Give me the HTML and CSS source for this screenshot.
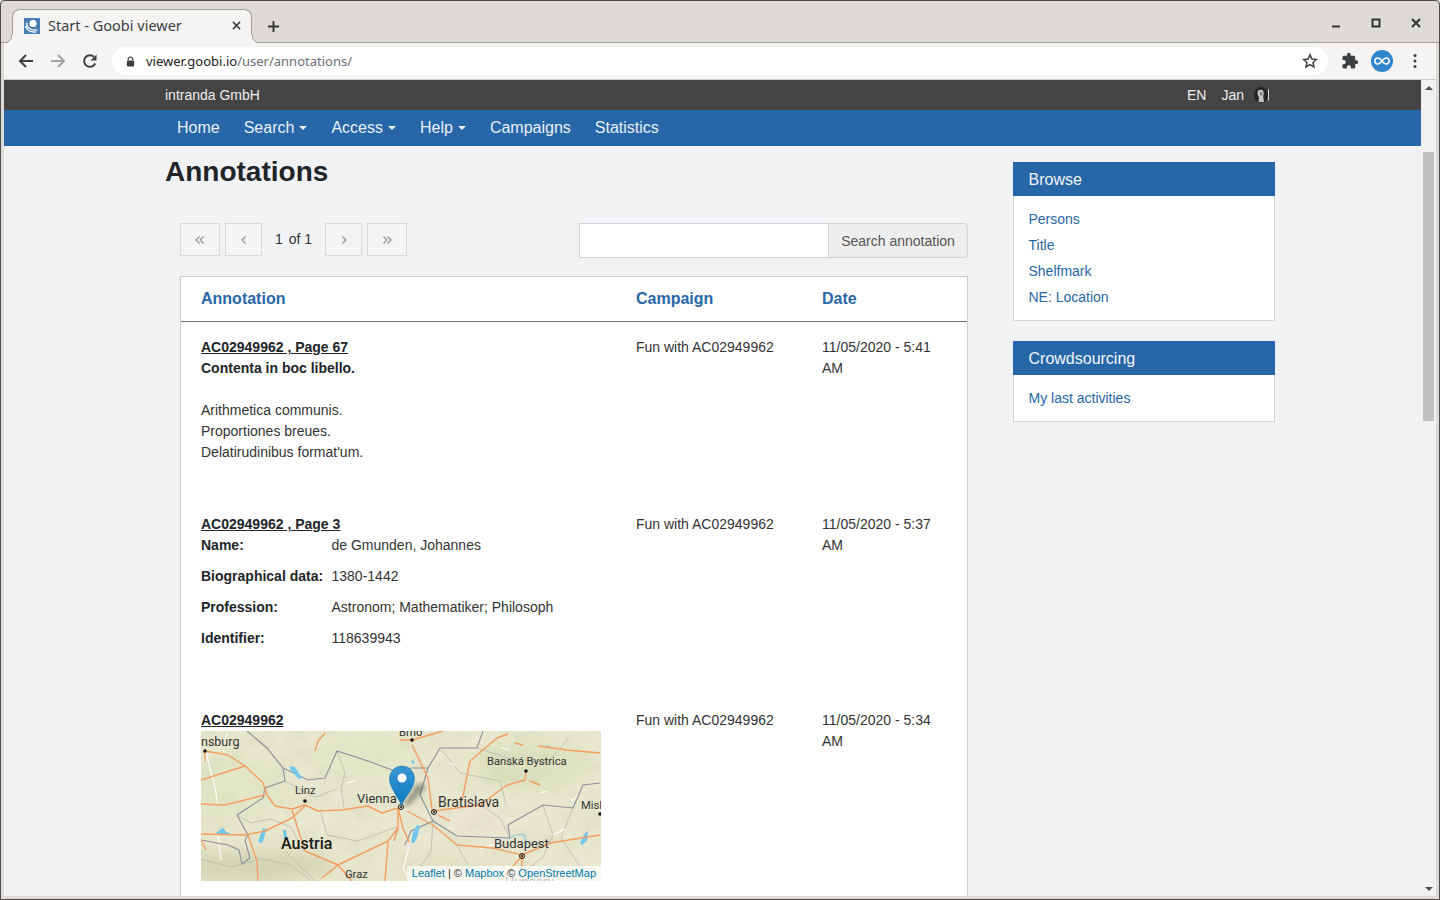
FILE: index.html
```html
<!DOCTYPE html>
<html lang="en">
<head>
    <meta charset="UTF-8">
    <title>Start - Goobi viewer</title>
    <link rel="stylesheet" href="styles.css">
</head>
<body>
<div class="window">
    <!-- Browser tabs -->
    <div class="tabstrip">
        <div class="tab">
            <svg class="favicon" viewBox="0 0 16 16">
                <rect width="16" height="16" fill="#4a7eb3"/>
                <circle cx="9" cy="5.5" r="3.6" fill="#fff"/>
                <path d="M2.500 4.500c0 5 4 8.500 11 7.500M1.500 8c1 4 5 6.500 10.500 6" fill="none" stroke="#fff" stroke-width="1.300"/>
            </svg>
            <span class="tab-title">Start - Goobi viewer</span>
            <svg class="tab-close" viewBox="0 0 10 10"><path d="M1 1l8 8M9 1l-8 8" stroke="#3c4043" stroke-width="1.700"/></svg>
        </div>
        <svg class="new-tab" viewBox="0 0 14 14"><path d="M7 1v12M1 7h12" stroke="#333" stroke-width="2"/></svg>
        <div class="win-controls">
            <svg viewBox="0 0 10 10"><path d="M1 8.500h8" stroke="#2e3436" stroke-width="2"/></svg>
            <svg viewBox="0 0 10 10"><rect x="1.500" y="1.500" width="7" height="7" fill="none" stroke="#2e3436" stroke-width="2"/></svg>
            <svg viewBox="0 0 10 10"><path d="M1 1l8 8M9 1l-8 8" stroke="#2e3436" stroke-width="2"/></svg>
        </div>
    </div>

    <!-- Browser toolbar -->
    <div class="toolbar">
        <svg class="tool" viewBox="0 0 16 16"><path d="M15 8H2.500M8 2L2 8l6 6" fill="none" stroke="#3c4043" stroke-width="2"/></svg>
        <svg class="tool" viewBox="0 0 16 16"><path d="M1 8h12.500M8 2l6 6-6 6" fill="none" stroke="#a3a3a3" stroke-width="2"/></svg>
        <svg class="tool" viewBox="0 0 16 16"><path d="M13.200 10.500A5.800 5.800 0 1 1 12 3.900" fill="none" stroke="#3c4043" stroke-width="2"/><path d="M14.500 1.500v6h-6z" fill="#3c4043"/></svg>
        <div class="omnibox">
            <svg class="lock" viewBox="0 0 10 12"><path d="M2.500 5V3.500a2.500 2.500 0 0 1 5 0V5" fill="none" stroke="#3c4043" stroke-width="1.300"/><rect x="1" y="5" width="8" height="6.500" rx="1" fill="#3c4043"/></svg>
            <span class="url">viewer.goobi.io<span class="url-path">/user/annotations/</span></span>
            <svg class="star" viewBox="0 0 16 16"><path d="M8 1.800l1.900 4.200 4.500.5-3.400 3 1 4.500L8 11.700 4 14l1-4.500-3.400-3 4.500-.5z" fill="none" stroke="#3c4043" stroke-width="1.500"/></svg>
        </div>
        <svg class="puzzle" viewBox="0 0 24 24"><path d="M20.500 11H19V7c0-1.100-.9-2-2-2h-4V3.500C13 2.120 11.880 1 10.500 1S8 2.120 8 3.500V5H4c-1.100 0-1.990.9-1.990 2v3.800H3.500c1.490 0 2.700 1.210 2.700 2.700s-1.210 2.700-2.700 2.700H2V20c0 1.100.9 2 2 2h3.800v-1.500c0-1.490 1.210-2.700 2.700-2.700 1.490 0 2.700 1.210 2.700 2.700V22H17c1.100 0 2-.9 2-2v-4h1.500c1.380 0 2.500-1.120 2.500-2.500S21.880 11 20.500 11z" fill="#3c4043"/></svg>
        <svg class="profile" viewBox="0 0 22 22"><circle cx="11" cy="11" r="11" fill="#2f86cc"/><path d="M11 11c-1.600-2.300-2.800-3-4.200-3a3 3 0 0 0 0 6c1.400 0 2.600-.7 4.200-3s2.800-3 4.200-3a3 3 0 0 1 0 6c-1.400 0-2.600-.7-4.200-3z" fill="none" stroke="#fff" stroke-width="1.600"/></svg>
        <svg class="kebab" viewBox="0 0 4 16"><circle cx="2" cy="2.500" r="1.500" fill="#3c4043"/><circle cx="2" cy="8" r="1.500" fill="#3c4043"/><circle cx="2" cy="13.500" r="1.500" fill="#3c4043"/></svg>
    </div>

    <div class="viewport">
        <div class="page">
            <div class="topbar">
                <div class="wrap topbar-inner">
                    <span>intranda GmbH</span>
                    <div class="user-menu">
                        <span>EN</span>
                        <span>Jan</span>
                        <svg class="avatar" viewBox="0 0 15 16">
                            <ellipse cx="7" cy="8" rx="7" ry="8" fill="#262626"/>
                            <path d="M3.500 5c0-2.500 5-3 6-.5.500 1.500.3 3-.3 4.500l.8 6H4.500l.5-4.500C4 9 3.500 7 3.500 5z" fill="#c4c4c4"/>
                            <path d="M6 5h2.200v3.500H6z" fill="#7f7f7f"/>
                            <path d="M14.500 2.500v11" stroke="#d8d8d8"/>
                        </svg>
                    </div>
                </div>
            </div>
            <nav class="navbar">
                <div class="wrap nav-inner">
                    <a>Home</a>
                    <a class="has-caret">Search</a>
                    <a class="has-caret">Access</a>
                    <a class="has-caret">Help</a>
                    <a>Campaigns</a>
                    <a>Statistics</a>
                </div>
            </nav>

            <div class="wrap layout">
                <main class="content">
                    <h1>Annotations</h1>

                    <div class="list-controls">
                        <div class="pager">
                            <button class="page-btn wide"><svg viewBox="0 0 10 10"><path d="M4.500 1.500L1 5l3.500 3.500M8.500 1.500L5 5l3.500 3.500" fill="none" stroke="#8a8a8a" stroke-width="1.100"/></svg></button>
                            <button class="page-btn"><svg viewBox="0 0 10 10"><path d="M6.500 1.500L3 5l3.500 3.500" fill="none" stroke="#8a8a8a" stroke-width="1.100"/></svg></button>
                            <span class="page-count"><span>1</span><span>of 1</span></span>
                            <button class="page-btn"><svg viewBox="0 0 10 10"><path d="M3.500 1.500L7 5 3.500 8.500" fill="none" stroke="#8a8a8a" stroke-width="1.100"/></svg></button>
                            <button class="page-btn wide"><svg viewBox="0 0 10 10"><path d="M1.500 1.500L5 5 1.500 8.500M5.500 1.500L9 5 5.500 8.500" fill="none" stroke="#8a8a8a" stroke-width="1.100"/></svg></button>
                        </div>
                        <div class="search-group">
                            <input type="text" class="search-input">
                            <button class="search-btn">Search annotation</button>
                        </div>
                    </div>

                    <table class="annotations">
                        <colgroup>
                            <col class="col-annotation">
                            <col class="col-campaign">
                            <col class="col-date">
                        </colgroup>
                        <thead>
                            <tr>
                                <th>Annotation</th>
                                <th>Campaign</th>
                                <th>Date</th>
                            </tr>
                        </thead>
                        <tbody>
                            <tr class="row-text">
                                <td>
                                    <a class="doc-link">AC02949962 , Page 67</a><br>
                                    <strong>Contenta in boc libello.</strong><br>
                                    <br>
                                    Arithmetica communis.<br>
                                    Proportiones breues.<br>
                                    Delatirudinibus format'um.
                                </td>
                                <td>Fun with AC02949962</td>
                                <td>11/05/2020 - 5:41 AM</td>
                            </tr>
                            <tr class="row-person">
                                <td>
                                    <a class="doc-link">AC02949962 , Page 3</a>
                                    <dl class="person">
                                        <dt>Name:</dt><dd>de Gmunden, Johannes</dd>
                                        <dt>Biographical data:</dt><dd>1380-1442</dd>
                                        <dt>Profession:</dt><dd>Astronom; Mathematiker; Philosoph</dd>
                                        <dt>Identifier:</dt><dd>118639943</dd>
                                    </dl>
                                </td>
                                <td>Fun with AC02949962</td>
                                <td>11/05/2020 - 5:37 AM</td>
                            </tr>
                            <tr>
                                <td>
                                    <a class="doc-link">AC02949962</a>
                                    <div class="map">
                                        <svg class="map-tiles" viewBox="0 0 400 150">
                                            <defs>
                                                <filter id="soft"><feGaussianBlur stdDeviation="8"/></filter>
                                                <filter id="softer"><feGaussianBlur stdDeviation="2.500"/></filter>
                                                <filter id="relief" x="0" y="0" width="100%" height="100%">
                                                    <feTurbulence type="fractalNoise" baseFrequency=".035 .05" numOctaves="4" seed="7"/>
                                                    <feColorMatrix values="0 0 0 0 .62  0 0 0 0 .65  0 0 0 0 .45  1.800 0 0 0 -.75"/>
                                                </filter>
                                                <linearGradient id="pin" x1="0" y1="0" x2="0" y2="1">
                                                    <stop offset="0" stop-color="#3b98d4"/>
                                                    <stop offset="1" stop-color="#0a78bd"/>
                                                </linearGradient>
                                            </defs>
                                            <rect width="400" height="150" fill="#e8e7cf"/>
                                            <g filter="url(#soft)">
                                                <ellipse cx="55" cy="135" rx="80" ry="14" fill="#d2d4b2"/>
                                                <ellipse cx="30" cy="55" rx="55" ry="30" fill="#e2e6c6"/>
                                                <ellipse cx="160" cy="25" rx="50" ry="22" fill="#e3e7c8"/>
                                                <ellipse cx="330" cy="35" rx="60" ry="24" fill="#dde1c0"/>
                                                <ellipse cx="270" cy="88" rx="40" ry="18" fill="#ebe6d4"/>
                                                <ellipse cx="240" cy="138" rx="50" ry="12" fill="#e2e2c6"/>
                                            </g>
                                            <rect width="400" height="150" filter="url(#relief)" opacity=".45"/>
                                            <!-- minor roads and regional borders -->
                                            <g fill="none" stroke="#bcc0b2" stroke-width=".9">
                                                <path d="M136 20L144 42 140 58 143 76M84 50L114 66 136 58M120 82L126 104 156 110 196 96"/>
                                                <path d="M36 84L50 92 70 88 90 96 102 120M0 128L30 136 60 128 90 134 110 150"/>
                                                <path d="M239 17L259 42 299 50 305 74M276 17L306 27 346 32 368 7M342 74L352 104 342 126 312 150"/>
                                                <path d="M232 90L230 120 210 150M256 114L276 150M309 107L299 87 269 67M372 77L360 107 380 137M84 120L114 150"/>
                                            </g>
                                            <g fill="none" stroke="#fff" stroke-width="1.100">
                                                <path d="M5 22L13 52 17 74M17 103L20 129M248 32L254 34M300 16L308 19M340 62L346 60M370 70L378 64"/>
                                                <path d="M352 104L364 98M208 116L202 138 210 150M146 52L154 50M24 14L26 2M278 118L294 113"/>
                                            </g>
                                            <!-- country borders -->
                                            <g fill="none" stroke="#8b8f9b" stroke-width="1.100">
                                                <path d="M46 0L66 17 82 37 84 50 64 57 62 67 36 84 47 104 44 109 49 127 41 133 38 119 27 114 0 109"/>
                                                <path d="M82 37L107 49 124 47 136 20 167 30 191 39 211 37 227 37 239 17 276 17 282 0"/>
                                                <path d="M227 37L219 64 232 90 256 105 309 107 307 94 342 74 372 77 382 54 399 52"/>
                                                <path d="M232 90L210 100 204 114"/>
                                            </g>
                                            <!-- water -->
                                            <g fill="#72c8ec">
                                                <path d="M89 35L94 36 101 47 98 48 93 43 89 38z"/>
                                                <path d="M15 102L20 98 22 97 25 101 29 102 28 104H16z"/>
                                                <path d="M62 97L65 98 63 108 61 112 57 111 59 105z"/>
                                                <path d="M82 99H85L86 108 83 109z"/>
                                                <path d="M216 94L219 95 216 107 213 112 210 111 212 101z"/>
                                                <path d="M211 29L214 31 213 33 210 31z"/>
                                                <path d="M384 102L387 100 386 110 381 114 379 112z"/>
                                                <path d="M345 14L349 16 346 17z"/>
                                            </g>
                                            <path d="M309 107C315 103 319 103 323 104L326 114" fill="none" stroke="#72c8ec" stroke-width="1.100"/>
                                            <!-- major roads -->
                                            <g fill="none" stroke="#f59e60" stroke-width="1.400" stroke-linejoin="round">
                                                <path d="M4 20L27 24 44 35 62 52 66 64 74 75 91 78 104 74 117 80 141 79 167 75 181 82 197 77"/>
                                                <path d="M0 49L44 35M0 73L24 74 64 64M0 103L44 104 64 100 91 87 104 75"/>
                                                <path d="M91 79L104 120 137 134 187 110 197 97 197 77M137 134L151 150M137 134L121 147M47 104L56 130 57 150M187 110L184 150"/>
                                                <path d="M114 20L117 10 124 2M199 9H211L242 0M211 14L227 47 231 79"/>
                                                <path d="M261 70L269 30 296 7 307 3M232 80L279 74 306 54 324 49 325 40M329 50L339 54M237 84L249 90"/>
                                                <path d="M206 80L232 94 256 114 292 117 321 124 349 112 399 104M321 125L299 150M321 125V150M337 15L366 19 399 22M314 12L322 14"/>
                                                <path d="M197 77L202 97 208 111M197 97L193 110M4 20V30M0 109L5 119"/>
                                            </g>
                                            <!-- cities -->
                                            <g fill="#111">
                                                <circle cx="4" cy="20" r="1.800"/>
                                                <circle cx="104" cy="70" r="1.800"/>
                                                <circle cx="211" cy="9" r="1.800"/>
                                                <circle cx="325" cy="40" r="1.800"/>
                                                <circle cx="399" cy="83" r="1.800"/>
                                            </g>
                                            <g fill="none" stroke="#111">
                                                <circle cx="200" cy="76" r="2.500"/>
                                                <circle cx="233" cy="81" r="2.500"/>
                                                <circle cx="321" cy="125" r="2.500"/>
                                            </g>
                                            <g fill="#111">
                                                <circle cx="200" cy="76" r="1"/>
                                                <circle cx="233" cy="81" r="1"/>
                                                <circle cx="321" cy="125" r="1"/>
                                            </g>
                                            <g class="map-label">
                                                <text class="map-label-md" x="0" y="15">nsburg</text>
                                                <text x="94" y="63">Linz</text>
                                                <text class="map-label-lg" x="156" y="72">Vienna</text>
                                                <text class="map-label-xl" x="237" y="76">Bratislava</text>
                                                <text x="286" y="34">Banská Bystrica</text>
                                                <text class="map-label-lg" x="293" y="117">Budapest</text>
                                                <text x="380" y="78">Misl</text>
                                                <text x="198" y="5">Brno</text>
                                                <text x="144" y="147">Graz</text>
                                                <text class="map-label-country" x="80" y="118">Austria</text>
                                                <text class="map-label-lg" x="304" y="155">Hungary</text>
                                            </g>
                                            <!-- marker -->
                                            <path d="M202 74L216 54C222 50 226 54 221 60L207 75z" fill="#3d3d3d" opacity=".5" filter="url(#softer)"/>
                                            <path d="M200.500 74.500C198.500 67.500 188.500 57.500 188.500 47.500A12.500 12.500 0 0 1 213.500 47.500C213.500 57.500 202.500 67.500 200.500 74.500z" fill="url(#pin)" stroke="#1b74b4" stroke-width=".6"/>
                                            <circle cx="201" cy="47" r="4.500" fill="#fff"/>
                                        </svg>
                                        <div class="attribution"><a>Leaflet</a> | © <a>Mapbox</a> © <a>OpenStreetMap</a></div>
                                    </div>
                                </td>
                                <td>Fun with AC02949962</td>
                                <td>11/05/2020 - 5:34 AM</td>
                            </tr>
                        </tbody>
                    </table>
                </main>

                <aside class="sidebar">
                    <section class="widget">
                        <h3>Browse</h3>
                        <ul>
                            <li><a>Persons</a></li>
                            <li><a>Title</a></li>
                            <li><a>Shelfmark</a></li>
                            <li><a>NE: Location</a></li>
                        </ul>
                    </section>
                    <section class="widget">
                        <h3>Crowdsourcing</h3>
                        <ul>
                            <li><a>My last activities</a></li>
                        </ul>
                    </section>
                </aside>
            </div>
        </div>

        <div class="scrollbar">
            <span class="arrow-up"></span>
            <div class="thumb"></div>
            <span class="arrow-down"></span>
        </div>
    </div>
</div>
</body>
</html>
```

FILE: styles.css
```css
/* Global styles */
html, body {
    margin: 0;
    padding: 0;
    height: 900px;
    overflow: hidden;
}

body {
    font-family: "Liberation Sans", Arial, sans-serif;
    font-size: 14px;
    line-height: 21px;
    color: #212529;
}

/* Browser window */
.window {
    width: 1440px;
    height: 900px;
    box-sizing: border-box;
    border: 1px solid #4c4c4c;
    border-radius: 4px 4px 0 0;
    padding: 0 3px 3px;
    background-color: #dedbd7;
    display: flex;
    flex-direction: column;
}

.tabstrip {
    height: 42px;
    flex: none;
    display: flex;
    align-items: flex-end;
    border-bottom: 1px solid #a5a19c;
    box-sizing: border-box;
    margin: 0 -3px;
    padding-left: 11px;
}

.tab {
    position: relative;
    width: 240px;
    height: 34px;
    box-sizing: border-box;
    margin-bottom: -1px;
    padding: 0 11px 2px;
    background-color: #f5f4f2;
    border: 1px solid #a5a19c;
    border-bottom: none;
    border-radius: 8px 8px 0 0;
    display: flex;
    align-items: center;
}

/* flared feet of the active tab */
.tab::before,
.tab::after {
    content: "";
    position: absolute;
    bottom: 0;
    width: 9px;
    height: 8px;
}

.tab::before {
    left: -9px;
    background: radial-gradient(circle at 0 0, transparent 7.500px, #a5a19c 7.500px, #a5a19c 8.500px, #f5f4f2 8.500px);
}

.tab::after {
    right: -9px;
    background: radial-gradient(circle at 100% 0, transparent 7.500px, #a5a19c 7.500px, #a5a19c 8.500px, #f5f4f2 8.500px);
}

.favicon {
    width: 16px;
    height: 16px;
    flex: none;
}

.tab-title {
    font-family: "Noto Sans", sans-serif;
    font-size: 14.500px;
    color: #3c4043;
    margin-left: 8px;
    flex: 1;
}

.tab-close {
    width: 9px;
    height: 9px;
    margin-right: -1px;
}

.new-tab {
    width: 13px;
    height: 13px;
    margin: 0 0 9px 15px;
}

.win-controls {
    margin-left: auto;
    display: flex;
    gap: 30px;
    margin-bottom: 14px;
    margin-right: 18px;
}

.win-controls svg {
    width: 10px;
    height: 10px;
}

.toolbar {
    height: 37px;
    flex: none;
    box-sizing: border-box;
    background-color: #f5f4f2;
    border-bottom: 1px solid #cfcdca;
    display: flex;
    align-items: center;
    padding: 0 0 0 14px;
}

.tool {
    width: 16px;
    height: 16px;
    margin-right: 16px;
}

.omnibox {
    width: 1216px;
    height: 28px;
    margin-left: -2px;
    box-sizing: border-box;
    background-color: #fff;
    border-radius: 14px;
    display: flex;
    align-items: center;
    padding: 0 10px 0 14px;
}

.lock {
    width: 9px;
    height: 11px;
    flex: none;
}

.url {
    font-family: "Noto Sans", sans-serif;
    font-size: 13px;
    color: #202124;
    margin-left: 11px;
    flex: 1;
}

.url-path {
    color: #6b6e72;
}

.star {
    width: 16px;
    height: 16px;
}

.puzzle {
    width: 18px;
    height: 18px;
    margin-left: 13px;
}

.profile {
    width: 22px;
    height: 22px;
    margin-left: 12px;
}

.kebab {
    width: 4px;
    height: 16px;
    margin-left: 20px;
}

/* Page */
.viewport {
    flex: 1;
    display: flex;
    min-height: 0;
}

.page {
    flex: 1;
    overflow: hidden;
    background-color: #f1f2f4;
}

.wrap {
    width: 1110px;
    margin-left: 161px;
}

.topbar {
    height: 30px;
    background-color: #444;
    color: #eee;
}

.topbar-inner {
    height: 30px;
    display: flex;
    justify-content: space-between;
    align-items: center;
}

.user-menu {
    display: flex;
    align-items: center;
    gap: 15px;
    padding-right: 6px;
}

.avatar {
    width: 15px;
    height: 16px;
    margin-left: -5px;
}

.navbar {
    height: 36px;
    background-color: #2767a8;
}

.nav-inner {
    display: flex;
    align-items: center;
    height: 36px;
    gap: 24px;
    padding: 0 0 2px 12px;
    box-sizing: border-box;
    font-size: 16px;
    color: #e9eff6;
}

.has-caret::after {
    content: "";
    display: inline-block;
    margin-left: 5px;
    vertical-align: 3px;
    border-top: 4.500px solid;
    border-left: 4.500px solid transparent;
    border-right: 4.500px solid transparent;
}

.layout {
    display: flex;
    align-items: flex-start;
}

.content {
    width: 803px;
    flex: none;
}

h1 {
    font-size: 28px;
    font-weight: bold;
    line-height: 34px;
    margin: 9px 0 0;
}

.list-controls {
    margin: 34px 0 0 15px;
    display: flex;
    justify-content: space-between;
    align-items: flex-start;
}

.pager {
    display: flex;
    align-items: center;
    height: 33px;
}

.page-btn {
    width: 37px;
    height: 33px;
    padding: 0;
    background-color: #f4f4f5;
    border: 1px solid #dadada;
    display: flex;
    align-items: center;
    justify-content: center;
    margin-right: 5px;
}

.page-btn.wide {
    width: 40px;
}

.page-btn svg {
    width: 10px;
    height: 10px;
}

.page-count {
    width: 50px;
    margin-left: 8px;
    display: flex;
    gap: 6px;
    color: #333;
}

.search-group {
    display: flex;
}

.search-input {
    width: 250px;
    height: 35px;
    box-sizing: border-box;
    padding: 0;
    background-color: #fff;
    border: 1px solid #ced4da;
    outline: none;
}

.search-btn {
    width: 140px;
    height: 35px;
    margin-left: -1px;
    font-family: inherit;
    font-size: 14px;
    color: #555;
    background-color: #eee;
    border: 1px solid #d2d4d8;
    border-radius: 0 4px 4px 0;
}

/* Annotation table */
.annotations {
    width: 788px;
    margin: 18px 0 0 15px;
    table-layout: fixed;
    border-collapse: separate;
    border-spacing: 0;
    background-color: #fff;
    border: 1px solid #ccc;
}

.col-annotation {
    width: 435px;
}

.col-campaign {
    width: 186px;
}

th {
    height: 45px;
    padding: 0 20px 2px;
    box-sizing: border-box;
    text-align: left;
    font-size: 16px;
    color: #2767a8;
    border-bottom: 1px solid #6c6c6c;
}

td {
    padding: 15px 20px 15px;
    vertical-align: top;
    color: #333;
}

.row-text td:first-child {
    padding-bottom: 36px;
}

.row-person td:first-child {
    padding-bottom: 46px;
}

.doc-link {
    font-weight: bold;
    text-decoration: underline;
    color: #212529;
}

td strong {
    color: #212529;
}

.person {
    display: grid;
    grid-template-columns: 130.500px 1fr;
    row-gap: 10px;
    margin: 0;
}

.person dt {
    font-weight: bold;
    color: #212529;
}

.person dd {
    margin: 0;
}

/* Map */
.map {
    position: relative;
    width: 400px;
    height: 150px;
    overflow: hidden;
}

.map-tiles {
    display: block;
    width: 400px;
    height: 150px;
}

.map-label text {
    font-family: "Roboto", sans-serif;
    font-size: 11.200px;
    fill: #333;
}

.map-label .map-label-md {
    font-size: 12.500px;
}

.map-label .map-label-lg {
    font-size: 13px;
}

.map-label .map-label-xl {
    font-size: 14px;
}

.map-label .map-label-country {
    font-size: 16px;
    font-weight: 500;
    fill: #1a1a1a;
}

.attribution {
    position: absolute;
    right: 0;
    bottom: 0;
    padding: 0 5px;
    font-size: 11px;
    line-height: 15px;
    color: #333;
    background-color: rgba(255, 255, 255, 0.7);
}

.attribution a {
    color: #0078a8;
}

/* Sidebar */
.sidebar {
    width: 262px;
    margin: 16px 0 0 45px;
    flex: none;
}

.widget {
    margin-bottom: 20px;
    background-color: #fff;
    border: 1px solid #d4d4d4;
    border-top: none;
    box-sizing: border-box;
}

.widget h3 {
    margin: 0 -1px;
    height: 34px;
    padding-left: 15.500px;
    font-size: 16px;
    font-weight: normal;
    line-height: 35px;
    color: #f2f5f9;
    background-color: #2767a8;
}

.widget ul {
    list-style: none;
    margin: 0;
    padding: 10px 14.500px;
}

.widget li {
    height: 26px;
    line-height: 26px;
}

.widget a {
    color: #2767a8;
}

/* Fake scrollbar */
.scrollbar {
    width: 15px;
    flex: none;
    background-color: #f1f1f1;
    position: relative;
    display: flex;
    flex-direction: column;
    align-items: center;
}

.thumb {
    width: 11px;
    height: 269px;
    margin-top: 72px;
    background-color: #c1c1c1;
}

.arrow-up,
.arrow-down {
    position: absolute;
    border-left: 4px solid transparent;
    border-right: 4px solid transparent;
}

.arrow-up {
    top: 6px;
    border-bottom: 4px solid #505050;
}

.arrow-down {
    bottom: 5px;
    border-top: 4px solid #505050;
}
```
